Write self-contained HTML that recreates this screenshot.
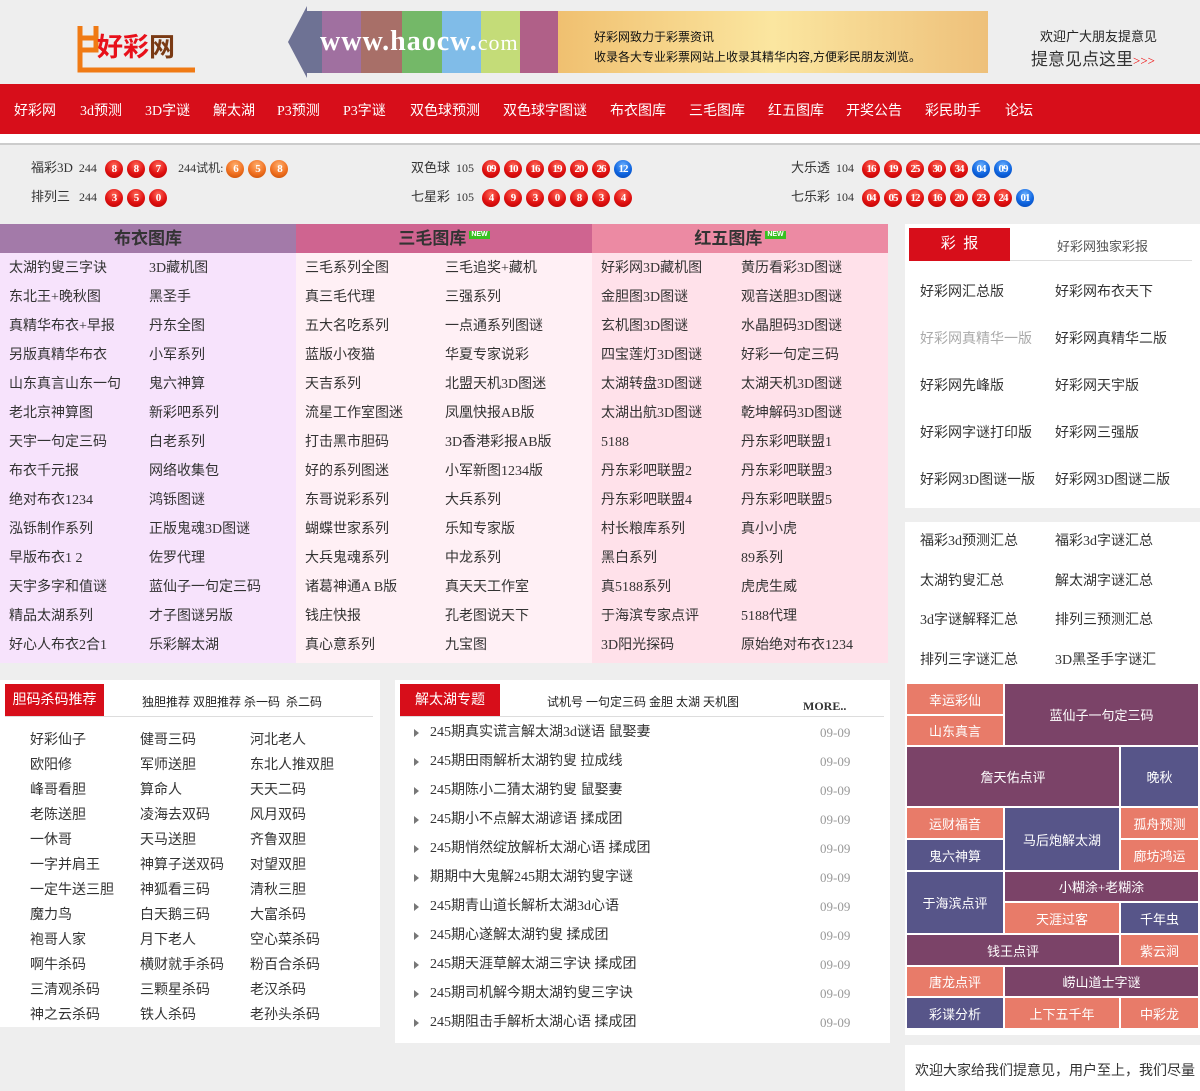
<!DOCTYPE html>
<html><head><meta charset="utf-8"><style>
*{margin:0;padding:0;box-sizing:border-box}
body{width:1200px;height:1091px;background:#eee;font-family:"Liberation Serif","Noto Sans CJK SC",sans-serif;font-size:14px;color:#333;position:relative;overflow:hidden}
.a{position:absolute;white-space:nowrap}
.nav{position:absolute;left:0;top:84px;width:1200px;height:50px;background:#d70e1a}
.nav span{position:absolute;top:16px;color:#fff;font-size:14px}
.ball{display:inline-block;width:18px;height:18px;border-radius:50%;color:#fff;font-size:11px;font-weight:bold;text-align:center;line-height:18px;margin-right:4px;background:radial-gradient(circle at 50% 30%,#ff6a5a,#e01010 55%,#b00000);font-family:"Liberation Serif",serif;letter-spacing:-1px;vertical-align:middle}
.b{background:radial-gradient(circle at 50% 30%,#6ab0ff,#1066e0 55%,#0040b0)}
.o{background:radial-gradient(circle at 50% 30%,#ffb070,#f07020 55%,#c04800)}
.lt{font-size:13px}
.lt i{font-style:normal;font-size:12px;margin:0 8px 0 6px}
.col{position:absolute;top:224px;width:296px;height:439px}
.col .h{height:29px;line-height:29px;text-align:center;font-size:17px;font-weight:bold;color:#333}
.col ul{list-style:none;padding-left:9px;padding-top:1px}
.col li{display:inline-block;width:140px;height:29px;line-height:29px;font-size:14px;color:#333;white-space:nowrap}
.new{display:inline-block;background:#38c020;color:#fff;font-size:7px;line-height:8px;padding:0 2px;vertical-align:top;margin-top:7px;margin-left:3px;font-family:"Liberation Sans",sans-serif;font-weight:bold}
.t{position:absolute;color:#fff;font-size:13px;display:flex;align-items:center;justify-content:center}
.c{background:#e87b69}.p{background:#7b4368}.v{background:#575589}
.nl div{height:29px;line-height:29px}
.nl b{display:inline-block;width:0;height:0;border-left:5px solid #777;border-top:4px solid transparent;border-bottom:4px solid transparent;margin-right:11px;vertical-align:middle}
</style></head><body>
<!-- header -->
<svg class="a" style="left:68px;top:24px" width="130" height="50"><path d="M12 2v44h115" stroke="#f07a14" stroke-width="5" fill="none"/><path d="M12 14h16v12h-16M28 2v12" stroke="#f07a14" stroke-width="5" fill="none"/></svg>
<div class="a" style="left:97px;top:30px;font-size:26px;font-weight:bold;font-family:'Noto Sans CJK SC',sans-serif;color:#e8101a;line-height:32px">好彩<span style="color:#7a3a14">网</span></div>
<svg class="a" style="left:288px;top:6px" width="700" height="72"><polygon points="0,36 19,0 19,72" fill="#6e7294"/>
<rect x="19" y="5" width="15" height="62" fill="#6e7294"/><rect x="34" y="5" width="39" height="62" fill="#a070a0"/><rect x="73" y="5" width="41" height="62" fill="#a86f68"/><rect x="114" y="5" width="40" height="62" fill="#74b868"/><rect x="154" y="5" width="39" height="62" fill="#80bce8"/><rect x="193" y="5" width="39" height="62" fill="#c4dc78"/><rect x="232" y="5" width="38" height="62" fill="#b06088"/><defs><linearGradient id="g"><stop offset="0" stop-color="#f0c070"/><stop offset=".5" stop-color="#fbe6a0"/><stop offset="1" stop-color="#eec07a"/></linearGradient></defs><rect x="270" y="5" width="430" height="62" fill="url(#g)"/>
<text x="32" y="44" fill="#fff" font-family="Liberation Serif" font-size="28" font-weight="bold" letter-spacing="1">www.haocw.<tspan font-weight="normal" font-size="22">com</tspan></text></svg>
<div class="a" style="left:594px;top:28px;font-size:12px;color:#111">好彩网致力于彩票资讯</div>
<div class="a" style="left:594px;top:48px;font-size:12px;color:#111">收录各大专业彩票网站上收录其精华内容,方便彩民朋友浏览。</div>
<div class="a" style="left:1040px;top:26px;font-size:13px;color:#222">欢迎广大朋友提意见</div>
<div class="a" style="left:1031px;top:45px;font-size:17px;color:#333">提意见点这里<span style="color:#e00;font-size:13px">&gt;&gt;&gt;</span></div>
<div class="nav"><span style="left:14px">好彩网</span><span style="left:80px">3d预测</span><span style="left:145px">3D字谜</span><span style="left:213px">解太湖</span><span style="left:277px">P3预测</span><span style="left:343px">P3字谜</span><span style="left:410px">双色球预测</span><span style="left:503px">双色球字图谜</span><span style="left:610px">布衣图库</span><span style="left:689px">三毛图库</span><span style="left:768px">红五图库</span><span style="left:846px">开奖公告</span><span style="left:925px">彩民助手</span><span style="left:1005px">论坛</span></div>
<div class="a" style="left:0;top:134px;width:1200px;height:9px;background:#fff"></div>
<div class="a" style="left:0;top:143px;width:1200px;height:2px;background:#ccc"></div>
<!-- lottery -->
<div class="a lt" style="left:31px;top:157px">福彩3D<i>244</i><span class="ball">8</span><span class="ball">8</span><span class="ball">7</span> <span style="font-size:12px;margin:0 3px 0 4px">244试机:</span><span class="ball o">6</span><span class="ball o">5</span><span class="ball o">8</span></div>
<div class="a lt" style="left:31px;top:186px">排列三<i>&nbsp;244</i><span class="ball">3</span><span class="ball">5</span><span class="ball">0</span></div>
<div class="a lt" style="left:411px;top:157px">双色球<i>105</i><span class="ball">09</span><span class="ball">10</span><span class="ball">16</span><span class="ball">19</span><span class="ball">20</span><span class="ball">26</span><span class="ball b">12</span></div>
<div class="a lt" style="left:411px;top:186px">七星彩<i>105</i><span class="ball">4</span><span class="ball">9</span><span class="ball">3</span><span class="ball">0</span><span class="ball">8</span><span class="ball">3</span><span class="ball">4</span></div>
<div class="a lt" style="left:791px;top:157px">大乐透<i>104</i><span class="ball">16</span><span class="ball">19</span><span class="ball">25</span><span class="ball">30</span><span class="ball">34</span><span class="ball b">04</span><span class="ball b">09</span></div>
<div class="a lt" style="left:791px;top:186px">七乐彩<i>104</i><span class="ball">04</span><span class="ball">05</span><span class="ball">12</span><span class="ball">16</span><span class="ball">20</span><span class="ball">23</span><span class="ball">24</span><span class="ball b">01</span></div>
<!-- columns -->
<div class="col" style="left:0;background:#f7e3fc"><div class="h" style="background:#a37aa9">布衣图库</div><ul>
<li>太湖钓叟三字诀</li><li>3D藏机图</li><li>东北王+晚秋图</li><li>黑圣手</li><li>真精华布衣+早报</li><li>丹东全图</li><li>另版真精华布衣</li><li>小军系列</li><li>山东真言山东一句</li><li>鬼六神算</li><li>老北京神算图</li><li>新彩吧系列</li><li>天宇一句定三码</li><li>白老系列</li><li>布衣千元报</li><li>网络收集包</li><li>绝对布衣1234</li><li>鸿铄图谜</li><li>泓铄制作系列</li><li>正版鬼魂3D图谜</li><li>早版布衣1 2</li><li>佐罗代理</li><li>天宇多字和值谜</li><li>蓝仙子一句定三码</li><li>精品太湖系列</li><li>才子图谜另版</li><li>好心人布衣2合1</li><li>乐彩解太湖</li></ul></div>
<div class="col" style="left:296px;background:#fff0f5"><div class="h" style="background:#cf6490">三毛图库<span class="new">NEW</span></div><ul>
<li>三毛系列全图</li><li>三毛追奖+藏机</li><li>真三毛代理</li><li>三强系列</li><li>五大名吃系列</li><li>一点通系列图谜</li><li>蓝版小夜猫</li><li>华夏专家说彩</li><li>天吉系列</li><li>北盟天机3D图迷</li><li>流星工作室图迷</li><li>凤凰快报AB版</li><li>打击黑市胆码</li><li>3D香港彩报AB版</li><li>好的系列图迷</li><li>小军新图1234版</li><li>东哥说彩系列</li><li>大兵系列</li><li>蝴蝶世家系列</li><li>乐知专家版</li><li>大兵鬼魂系列</li><li>中龙系列</li><li>诸葛神通A B版</li><li>真天天工作室</li><li>钱庄快报</li><li>孔老图说天下</li><li>真心意系列</li><li>九宝图</li></ul></div>
<div class="col" style="left:592px;background:#ffe1ea;width:296px"><div class="h" style="background:#ec8aa3">红五图库<span class="new">NEW</span></div><ul>
<li>好彩网3D藏机图</li><li>黄历看彩3D图谜</li><li>金胆图3D图谜</li><li>观音送胆3D图谜</li><li>玄机图3D图谜</li><li>水晶胆码3D图谜</li><li>四宝莲灯3D图谜</li><li>好彩一句定三码</li><li>太湖转盘3D图谜</li><li>太湖天机3D图谜</li><li>太湖出航3D图谜</li><li>乾坤解码3D图谜</li><li>5188</li><li>丹东彩吧联盟1</li><li>丹东彩吧联盟2</li><li>丹东彩吧联盟3</li><li>丹东彩吧联盟4</li><li>丹东彩吧联盟5</li><li>村长粮库系列</li><li>真小小虎</li><li>黑白系列</li><li>89系列</li><li>真5188系列</li><li>虎虎生威</li><li>于海滨专家点评</li><li>5188代理</li><li>3D阳光探码</li><li>原始绝对布衣1234</li></ul></div>
<!-- right panel -->
<div class="a" style="left:905px;top:224px;width:295px;height:284px;background:#fff"></div>
<div class="a" style="left:909px;top:228px;width:101px;height:33px;background:#d70e1a;color:#fff;font-size:15px;text-align:center;line-height:33px">彩&nbsp;&nbsp;报</div>
<div class="a" style="left:1010px;top:260px;width:182px;height:1px;background:#ddd"></div>
<div class="a" style="left:1057px;top:236px;font-size:13px;color:#555">好彩网独家彩报</div>
<div class="a" style="left:920px;top:269px;line-height:47px;font-size:14px">好彩网汇总版<br><span style="color:#aaa">好彩网真精华一版</span><br>好彩网先峰版<br>好彩网字谜打印版<br>好彩网3D图谜一版</div>
<div class="a" style="left:1055px;top:269px;line-height:47px;font-size:14px">好彩网布衣天下<br>好彩网真精华二版<br>好彩网天宇版<br>好彩网三强版<br>好彩网3D图谜二版</div>
<div class="a" style="left:905px;top:522px;width:295px;height:513px;background:#fff"></div>
<div class="a" style="left:920px;top:522px;line-height:39.7px;font-size:14px">福彩3d预测汇总<br>太湖钓叟汇总<br>3d字谜解释汇总<br>排列三字谜汇总</div>
<div class="a" style="left:1055px;top:522px;line-height:39.7px;font-size:14px">福彩3d字谜汇总<br>解太湖字谜汇总<br>排列三预测汇总<br>3D黑圣手字谜汇</div>
<div class="t c" style="left:907px;top:684px;width:96px;height:30px">幸运彩仙</div>
<div class="t c" style="left:907px;top:716px;width:96px;height:29px">山东真言</div>
<div class="t p" style="left:1005px;top:684px;width:193px;height:61px">蓝仙子一句定三码</div>
<div class="t p" style="left:907px;top:747px;width:212px;height:59px">詹天佑点评</div>
<div class="t v" style="left:1121px;top:747px;width:77px;height:59px">晚秋</div>
<div class="t c" style="left:907px;top:808px;width:96px;height:30px">运财福音</div>
<div class="t v" style="left:907px;top:840px;width:96px;height:30px">鬼六神算</div>
<div class="t v" style="left:1005px;top:808px;width:114px;height:62px">马后炮解太湖</div>
<div class="t c" style="left:1121px;top:808px;width:77px;height:30px">孤舟预测</div>
<div class="t c" style="left:1121px;top:840px;width:77px;height:30px">廊坊鸿运</div>
<div class="t v" style="left:907px;top:872px;width:96px;height:61px">于海滨点评</div>
<div class="t p" style="left:1005px;top:872px;width:193px;height:29px">小糊涂+老糊涂</div>
<div class="t c" style="left:1005px;top:903px;width:114px;height:30px">天涯过客</div>
<div class="t v" style="left:1121px;top:903px;width:77px;height:30px">千年虫</div>
<div class="t p" style="left:907px;top:935px;width:212px;height:30px">钱王点评</div>
<div class="t c" style="left:1121px;top:935px;width:77px;height:30px">紫云涧</div>
<div class="t c" style="left:907px;top:967px;width:96px;height:29px">唐龙点评</div>
<div class="t p" style="left:1005px;top:967px;width:193px;height:29px">崂山道士字谜</div>
<div class="t v" style="left:907px;top:998px;width:96px;height:30px">彩谍分析</div>
<div class="t c" style="left:1005px;top:998px;width:114px;height:30px">上下五千年</div>
<div class="t c" style="left:1121px;top:998px;width:77px;height:30px">中彩龙</div>
<div class="a" style="left:905px;top:1045px;width:295px;height:46px;background:#fff"></div>
<div class="a" style="left:915px;top:1060px;font-size:14px;color:#333">欢迎大家给我们提意见，用户至上，我们尽量</div>
<!-- bottom left -->
<div class="a" style="left:0;top:680px;width:380px;height:347px;background:#fff"></div>
<div class="a" style="left:5px;top:684px;width:99px;height:33px;background:#d70e1a;color:#fff;font-size:14px;text-align:center;line-height:33px">胆码杀码推荐</div>
<div class="a" style="left:5px;top:716px;width:368px;height:1px;background:#ddd"></div>
<div class="a" style="left:142px;top:693px;font-size:12px;color:#222">独胆推荐 双胆推荐 杀一码&nbsp;&nbsp;杀二码</div>
<div class="a" style="left:30px;top:728px;line-height:25px;font-size:14px">好彩仙子<br>欧阳修<br>峰哥看胆<br>老陈送胆<br>一休哥<br>一字并肩王<br>一定牛送三胆<br>魔力鸟<br>袍哥人家<br>啊牛杀码<br>三清观杀码<br>神之云杀码</div>
<div class="a" style="left:140px;top:728px;line-height:25px;font-size:14px">健哥三码<br>军师送胆<br>算命人<br>凌海去双码<br>天马送胆<br>神算子送双码<br>神狐看三码<br>白天鹅三码<br>月下老人<br>横财就手杀码<br>三颗星杀码<br>铁人杀码</div>
<div class="a" style="left:250px;top:728px;line-height:25px;font-size:14px">河北老人<br>东北人推双胆<br>天天二码<br>风月双码<br>齐鲁双胆<br>对望双胆<br>清秋三胆<br>大富杀码<br>空心菜杀码<br>粉百合杀码<br>老汉杀码<br>老孙头杀码</div>
<!-- bottom middle -->
<div class="a" style="left:395px;top:680px;width:495px;height:363px;background:#fff"></div>
<div class="a" style="left:400px;top:684px;width:100px;height:33px;background:#d70e1a;color:#fff;font-size:14px;text-align:center;line-height:33px">解太湖专题</div>
<div class="a" style="left:400px;top:716px;width:484px;height:1px;background:#ddd"></div>
<div class="a" style="left:547px;top:693px;font-size:12px;color:#222">试机号 一句定三码 金胆 太湖 天机图</div>
<div class="a" style="left:803px;top:699px;font-size:12px;font-weight:bold;color:#333">MORE..</div>
<div class="a nl" style="left:414px;top:718px;font-size:14px;color:#333">
<div><b></b>245期真实谎言解太湖3d谜语 鼠娶妻</div>
<div><b></b>245期田雨解析太湖钓叟 拉成线</div>
<div><b></b>245期陈小二猜太湖钓叟 鼠娶妻</div>
<div><b></b>245期小不点解太湖谚语 揉成团</div>
<div><b></b>245期悄然绽放解析太湖心语 揉成团</div>
<div><b></b>期期中大鬼解245期太湖钓叟字谜</div>
<div><b></b>245期青山道长解析太湖3d心语</div>
<div><b></b>245期心遂解太湖钓叟 揉成团</div>
<div><b></b>245期天涯草解太湖三字诀 揉成团</div>
<div><b></b>245期司机解今期太湖钓叟三字诀</div>
<div><b></b>245期阻击手解析太湖心语 揉成团</div>
</div>
<div class="a" style="left:820px;top:718px;line-height:29px;font-size:13px;color:#999">09-09<br>09-09<br>09-09<br>09-09<br>09-09<br>09-09<br>09-09<br>09-09<br>09-09<br>09-09<br>09-09</div>
</body></html>
